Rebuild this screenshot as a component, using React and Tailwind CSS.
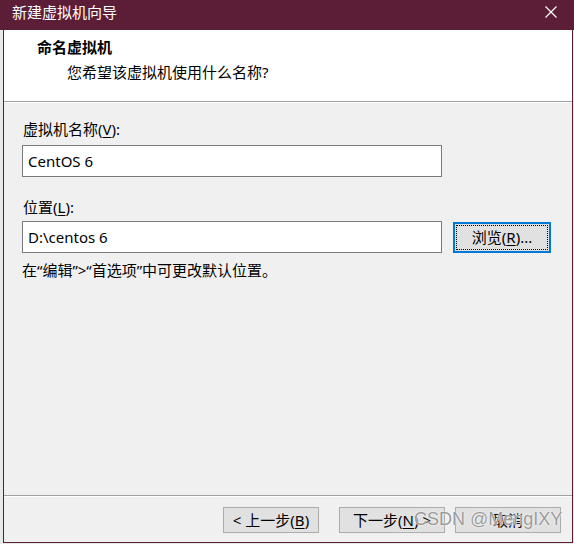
import React from 'react';

const font = { fontFamily: '"Noto Sans", "Noto Sans CJK SC", sans-serif' };

const Key = ({ k }) => (
  <>
    (<span className="underline underline-offset-2">{k}</span>)
  </>
);

const WizardButton = ({ className = '', children }) => (
  <button className={`h-[26px] border border-[#adadad] bg-[#e1e1e1] text-[15px] leading-none text-black ${className}`}>
    {children}
  </button>
);

const NewVmWizard = () => {
  return (
    <div className="relative w-[574px] h-[544px] bg-[#e9e9e9] flex flex-col overflow-hidden text-black" style={font}>
      {/* title bar */}
      <div className="h-[30px] shrink-0 bg-[#5c1d36] flex items-start justify-between pl-[12px] pr-[17px] pt-[2px]">
        <span className="text-white text-[15px] leading-[20px]">新建虚拟机向导</span>
        <svg width="12" height="12" viewBox="0 0 12 12" className="mt-[4px]">
          <path d="M0.5 0.5 L11.5 11.5 M11.5 0.5 L0.5 11.5" stroke="#fff" strokeWidth="1.2" />
        </svg>
      </div>

      <div className="flex-1 flex flex-col ml-[3px] mr-[1px] mb-[1px] border-x border-b border-[#5c1d36] bg-[#f0f0f0]">
        {/* header */}
        <div className="h-[72px] shrink-0 bg-white border-b border-[#a0a0a0] pt-[7px]">
          <div className="pl-[33px] text-[15px] leading-[20px] font-bold">命名虚拟机</div>
          <div className="pl-[63px] mt-[5px] text-[15px] leading-[20px]">您希望该虚拟机使用什么名称?</div>
        </div>
        <div className="h-px bg-white shrink-0" />

        {/* body */}
        <div className="flex-1 px-[18px] pt-[16px] text-[15px] leading-[20px]">
          <div className="pl-px">
            虚拟机名称<Key k="V" />:
          </div>
          <div className="mt-[6px] w-[420px] h-[32px] bg-white border border-[#7a7a7a] flex items-center px-[5px]">
            CentOS 6
          </div>

          <div className="mt-[20px] pl-px">
            位置<Key k="L" />:
          </div>
          <div className="mt-[4px] flex items-start gap-[11px]">
            <div className="w-[420px] h-[32px] bg-white border border-[#7a7a7a] flex items-center px-[5px]">
              D:\centos 6
            </div>
            <button className="mt-px w-[98px] h-[31px] border-2 border-[#0078d7] bg-[#e1e1e1] p-px">
              <span className="flex h-full w-full items-center justify-center border border-dotted border-black text-[15px] leading-none">
                浏览<Key k="R" />...
              </span>
            </button>
          </div>

          <div className="mt-[7px]">在“编辑”&gt;“首选项”中可更改默认位置。</div>
        </div>

        {/* footer */}
        <div className="shrink-0 border-t border-[#a0a0a0]">
          <div className="border-t border-white h-[46px] flex items-start justify-end gap-[10px] pr-[11px] pt-[10px]">
            <WizardButton className="w-[96px]">
              &lt; 上一步<Key k="B" />
            </WizardButton>
            <WizardButton className="w-[106px] ml-[10px]">
              下一步<Key k="N" /> &gt;
            </WizardButton>
            <WizardButton className="w-[106px]">取消</WizardButton>
          </div>
        </div>
      </div>

      {/* watermark */}
      <div
        className="absolute left-[414px] top-[508px] text-[18px] leading-[22px] text-[#9a9a9a] whitespace-nowrap pointer-events-none [text-shadow:0_0_1px_#ffffff,0_0_2px_#ffffff]"
        style={{ fontFamily: '"Liberation Sans", Arial, sans-serif' }}
      >
        CSDN @MengIXY
      </div>
    </div>
  );
};

export default function App() {
  return <NewVmWizard />;
}
